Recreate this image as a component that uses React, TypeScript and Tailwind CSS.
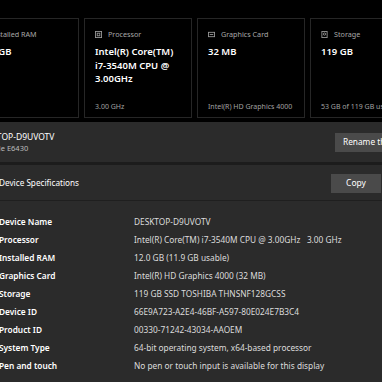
import React from "react";

const cards = [
  { label: "Installed RAM", value: "12 GB", foot: "", icon: "ram" },
  { label: "Processor", value: "Intel(R) Core(TM) i7-3540M CPU @ 3.00GHz", foot: "3.00 GHz", icon: "cpu" },
  { label: "Graphics Card", value: "32 MB", foot: "Intel(R) HD Graphics 4000", icon: "gpu" },
  { label: "Storage", value: "119 GB", foot: "53 GB of 119 GB used", icon: "disk" },
];

const specs: [string, string][] = [
  ["Device Name", "DESKTOP-D9UVOTV"],
  ["Processor", "Intel(R) Core(TM) i7-3540M CPU @ 3.00GHz   3.00 GHz"],
  ["Installed RAM", "12.0 GB (11.9 GB usable)"],
  ["Graphics Card", "Intel(R) HD Graphics 4000 (32 MB)"],
  ["Storage", "119 GB SSD TOSHIBA THNSNF128GCSS"],
  ["Device ID", "66E9A723-A2E4-46BF-A597-80E024E7B3C4"],
  ["Product ID", "00330-71242-43034-AAOEM"],
  ["System Type", "64-bit operating system, x64-based processor"],
  ["Pen and touch", "No pen or touch input is available for this display"],
];

function CardIcon({ kind }: { kind: string }) {
  return (
    <svg width="7" height="7" viewBox="0 0 8 8" fill="none" stroke="#9a9a9a" strokeWidth="1">
      {kind === "cpu" && (
        <>
          <rect x="0.5" y="0.5" width="7" height="7" />
          <rect x="2.5" y="2.5" width="3" height="3" />
        </>
      )}
      {kind === "gpu" && (
        <>
          <rect x="0.5" y="1.5" width="7" height="5" />
          <line x1="2" y1="4" x2="6" y2="4" />
        </>
      )}
      {kind === "disk" && (
        <>
          <rect x="1" y="0.5" width="6" height="7" />
          <circle cx="4" cy="3.5" r="1.3" />
        </>
      )}
      {kind === "ram" && <rect x="0.5" y="2" width="7" height="4" />}
    </svg>
  );
}

const App: React.FC = () => {
  return (
    <div className="w-[382px] h-[382px] overflow-hidden bg-[#2b2b2b] text-white font-['Segoe_UI','Noto_Sans',sans-serif]">
      {/* top cards */}
      <div className="bg-black pt-[18px] pb-[4px] overflow-hidden">
        <div className="flex gap-[5px] -ml-[29px]">
          {cards.map((c, i) => (
            <div
              key={c.label}
              className={
                "w-[108px] h-[100px] shrink-0 border border-[#262626] bg-black pr-[6px] pt-[10px] pb-[5px] flex flex-col " +
                (i === 0 ? "pl-[13px]" : "pl-[10px]")
              }
            >
              <div
                className={
                  "flex items-center gap-[6px] text-[7.2px] text-[#a8a8a8] leading-[10px] " +
                  (i === 0 ? "-ml-[8px]" : "")
                }
              >
                <CardIcon kind={c.icon} />
                <span>{c.label}</span>
              </div>
              <div className="mt-[6px] text-[9.5px] font-semibold leading-[13.5px]">{c.value}</div>
              <div className="mt-auto text-[7px] text-[#a0a0a0] whitespace-nowrap">{c.foot}</div>
            </div>
          ))}
        </div>
      </div>

      {/* device name panel */}
      <div className="h-[40px] bg-[#2b2b2b] flex items-center justify-between">
        <div className="-ml-[24px] flex flex-col">
          <span className="text-[8.5px] leading-[12px]">DESKTOP-D9UVOTV</span>
          <span className="text-[7.5px] leading-[11px] text-[#bdbdbd]">Latitude E6430</span>
        </div>
        <button className="h-[19px] w-[70px] -mr-[23px] bg-[#4a4a4a] text-[8.3px] pl-[8px] text-left whitespace-nowrap overflow-hidden">
          Rename this PC
        </button>
      </div>

      <div className="h-[3px] bg-[#1c1c1c]" />

      {/* specifications header */}
      <div className="h-[35px] pt-[2px] flex items-center justify-between">
        <span className="-ml-[1px] text-[8.2px]">Device Specifications</span>
        <button className="h-[19px] w-[50px] mr-[1px] bg-[#4a4a4a] text-[8.5px]">Copy</button>
      </div>
      <div className="h-px bg-[#1f1f1f]" />

      {/* specification rows */}
      <div className="pt-[12px] flex flex-col">
        {specs.map(([k, v]) => (
          <div key={k} className="h-[18px] flex items-center text-[8.3px]">
            <span className="w-[135px] -ml-[1px] font-semibold shrink-0">{k}</span>
            <span className="text-[#dcdcdc] whitespace-pre">{v}</span>
          </div>
        ))}
      </div>
    </div>
  );
};

export default App;
